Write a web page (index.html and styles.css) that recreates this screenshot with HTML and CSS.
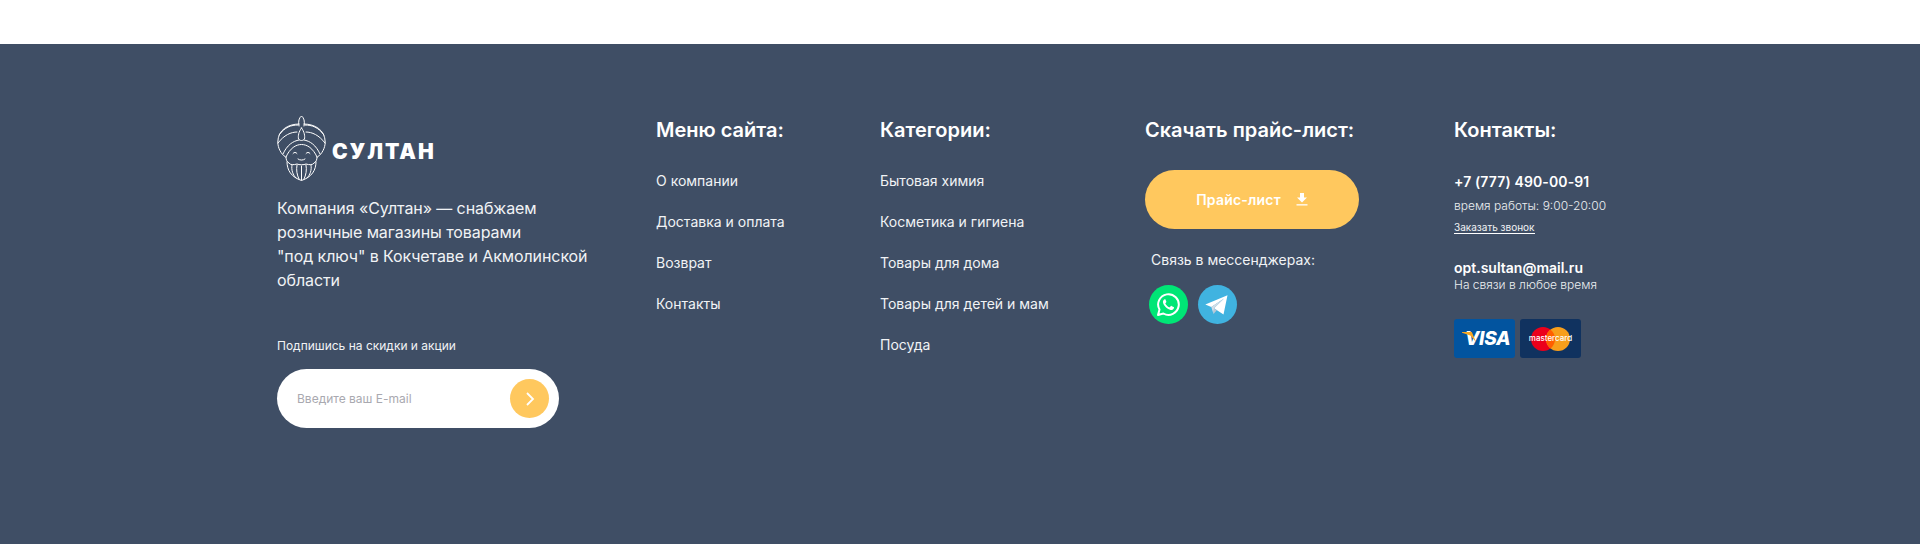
FILE: index.html
```html
<!DOCTYPE html>
<html lang="ru">
<head>
<meta charset="utf-8">
<title>Султан</title>
<link rel="stylesheet" href="styles.css">
</head>
<body>
<div class="top"></div>
<footer class="footer">
  <div class="col about">
    <div class="logo">
      <svg class="logo-mark" width="49" height="66" viewBox="0 0 49 66" fill="none" stroke="#fff" stroke-width="1" stroke-linecap="round" stroke-linejoin="round">
        <path d="M22 11C21 6 22 3 24.500 1C27 3 28 6 27 11"/>
        <path d="M22 9C11 9 1 15 .8 27C.8 33 4 39 8.500 42"/>
        <path d="M27 9C38 9 48 15 48.200 27C48.200 33 45 39 40.500 42"/>
        <path d="M2 20C8 12 14 10 21 10M47 20C41 12 35 10 28 10"/>
        <path d="M1 28C7 20 14 17 20 17M48 28C42 20 35 17 29 17"/>
        <path d="M24.500 13C27.500 17 28 21 27.500 24C26 26 23 26 21.500 24C21 21 21.500 17 24.500 13Z"/>
        <path d="M6 39C10 30 16 26 22 25M43 39C39 30 33 26 27 25"/>
        <path d="M9 42C13 33 19 29.500 24.500 29.500C30 29.500 36 33 40 42"/>
        <path d="M9 42C9 45 10 47 12 48C13 50 17 50 20 49C22 50 27 50 29 49C32 50 36 50 37 48C39 47 40 45 40 42"/>
        <path d="M16 38.500C17 37 19 37 20 38.500M29 38.500C30 37 32 37 33 38.500"/>
        <path d="M21 44C23 45.500 26 45.500 28 44"/>
        <path d="M10 47C10 55 14 62 24.500 65.500C35 62 39 55 39 47"/>
        <path d="M15 50C14 55 16 60 19 63M20 50C19 55 20 60 22 64M24.500 51V65M29 50C30 55 29 60 27 64M34 50C35 55 33 60 30 63"/>
      </svg>
      <span class="logo-text">СУЛТАН</span>
    </div>
    <p class="about-text">Компания «Султан» — снабжаем<br>розничные магазины товарами<br>"под ключ" в Кокчетаве и Акмолинской<br>области</p>
    <p class="sub-label">Подпишись на скидки и акции</p>
    <div class="subscribe">
      <span class="placeholder">Введите ваш E-mail</span>
      <span class="round-btn">
        <svg width="10" height="16" viewBox="0 0 10 16" fill="none" stroke="#fff" stroke-width="1.800"><path d="M2 2l6 6-6 6"/></svg>
      </span>
    </div>
  </div>

  <nav class="col menu">
    <h3 class="heading">Меню сайта:</h3>
    <ul class="links">
      <li>О компании</li>
      <li>Доставка и оплата</li>
      <li>Возврат</li>
      <li>Контакты</li>
    </ul>
  </nav>

  <nav class="col cats">
    <h3 class="heading">Категории:</h3>
    <ul class="links">
      <li>Бытовая химия</li>
      <li>Косметика и гигиена</li>
      <li>Товары для дома</li>
      <li>Товары для детей и мам</li>
      <li>Посуда</li>
    </ul>
  </nav>

  <div class="col price">
    <h3 class="heading">Скачать прайс-лист:</h3>
    <div class="price-btn">
      <span>Прайс-лист</span>
      <svg width="12" height="13" viewBox="0 0 12 13" fill="#fff"><path d="M4 0h4v4.500h3L6 9.500 1 4.500h3z"/><path d="M.5 11.200h11v1.300H.5z"/></svg>
    </div>
    <p class="msg-label">Связь в мессенджерах:</p>
    <div class="msgs">
      <span class="msg whatsapp">
        <svg width="25" height="25" viewBox="0 0 25 25" fill="none">
          <path d="M2 23l1.500-5.400A10.300 10.300 0 1 1 7.400 21.500z" stroke="#fff" stroke-width="2" stroke-linejoin="round"/>
          <path d="M9.400 6.900c-.4 0-1 .2-1.500.8-.6.700-1.100 1.700-.9 2.900.3 1.700 1.400 3.300 2.800 4.700 1.600 1.500 3.300 2.400 4.800 2.600 1.300.2 2.400-.4 3-1.200.4-.5.500-1.200.4-1.500l-2.500-1.300c-.3-.1-.5 0-.7.200l-.9 1.100c-.2.200-.4.200-.6.100-1.800-.7-3-1.900-3.900-3.500-.1-.2-.1-.4.100-.6l.7-.9c.2-.2.200-.4.100-.7l-1-2.400c-.1-.2-.3-.3-.4-.3z" fill="#fff"/>
        </svg>
      </span>
      <span class="msg telegram">
        <svg width="23" height="20" viewBox="0 0 23 20">
          <path d="M22.500.3L.3 9.600l6 2.300L19 3.500 9 13.300l9.500 6.200z" fill="#fff"/>
          <path d="M6.300 11.900l2.200 7 .5-5.600L19 3.500z" fill="#d5dde6"/>
          <path d="M8.500 18.900l3.300-3.700L9 13.300z" fill="#b9c6d4"/>
        </svg>
      </span>
    </div>
  </div>

  <div class="col contacts">
    <h3 class="heading">Контакты:</h3>
    <p class="strong phone">+7 (777) 490-00-91</p>
    <p class="small hours">время работы: 9:00-20:00</p>
    <p class="tiny">Заказать звонок</p>
    <p class="strong email">opt.sultan@mail.ru</p>
    <p class="small online">На связи в любое время</p>
    <div class="cards">
      <span class="card visa"><i class="visa-mark"></i><b class="visa-text">VISA</b></span>
      <span class="card mc">
        <svg width="39" height="24" viewBox="0 0 39 24">
          <circle cx="12" cy="12" r="12" fill="#eb001b"/>
          <circle cx="27" cy="12" r="12" fill="#f79e1b"/>
          <path d="M19.500 2.600a12 12 0 0 1 0 18.800 12 12 0 0 1 0-18.800z" fill="#ff5f00"/>
        </svg>
        <span class="mc-text">mastercard</span>
      </span>
    </div>
  </div>
</footer>
</body>
</html>
```
FILE: styles.css
```css
* { box-sizing: border-box; }
html, body { margin: 0; padding: 0; }
body {
  height: 544px;
  overflow: hidden;
  background: #fff;
  font-family: Inter, "Liberation Sans", sans-serif;
  color: #fff;
}
p, ul, h3 { margin: 0; padding: 0; }
ul { list-style: none; }
.top { height: 44px; background: #fff; }
.footer {
  height: 500px;
  background: #3f4e65;
  padding: 72px 0 0 277px;
  display: grid;
  grid-template-columns: 379px 224px 265px 309px 200px;
  align-items: start;
}
.logo { display: flex; align-items: center; gap: 6px; height: 66px; margin-top: -1px; }
.logo-mark { flex: none; }
.logo-text {
  font-size: 21px;
  font-weight: 900;
  letter-spacing: 1.900px;
  line-height: 1;
  margin-top: 6px;
}
.about-text {
  font-size: 16px;
  line-height: 24px;
  margin-top: 15px;
  font-weight: 400;
  letter-spacing: -.09px;
  color: #f1f3f5;
}
.sub-label { font-size: 12px; line-height: 16px; margin-top: 46px; font-weight: 400; color: #f1f3f5; }
.subscribe {
  width: 282px;
  height: 59px;
  margin-top: 15px;
  border-radius: 30px;
  background: #fff;
  display: flex;
  align-items: center;
  justify-content: space-between;
  padding: 0 10px 0 20px;
}
.placeholder { font-size: 12px; color: #a9a9b0; font-weight: 400; }
.round-btn {
  width: 39px;
  height: 39px;
  border-radius: 50%;
  background: #ffc85e;
  display: flex;
  align-items: center;
  justify-content: center;
}
.heading {
  font-size: 20px;
  line-height: 24px;
  font-weight: 600;
  margin-top: 2px;
}
.links { margin-top: 30px; }
.links li {
  font-size: 14px;
  line-height: 17px;
  font-weight: 400;
  margin-bottom: 24px;
  color: #f1f3f5;
}
.price-btn {
  width: 214px;
  height: 59px;
  margin-top: 28px;
  border-radius: 30px;
  background: #ffc85e;
  display: flex;
  align-items: center;
  justify-content: center;
  gap: 15px;
  font-size: 14px;
  font-weight: 600;
  letter-spacing: .2px;
}
.msg-label {
  font-size: 14px;
  line-height: 17px;
  font-weight: 400;
  margin: 22px 0 0 6px;
  color: #f1f3f5;
}
.msgs { display: flex; gap: 10px; margin: 17px 0 0 4px; }
.msg {
  width: 39px;
  height: 39px;
  border-radius: 50%;
  display: flex;
  align-items: center;
  justify-content: center;
}
.whatsapp { background: #00e676; }
.telegram { background: #40b3e0; }
.telegram svg { margin-right: 2px; }
.strong { font-size: 14px; line-height: 17px; font-weight: 600; }
.small { font-size: 12px; line-height: 15px; font-weight: 300; color: #eceef1; }
.phone { margin-top: 31px; letter-spacing: .12px; }
.hours { margin-top: 8px; }
.tiny {
  display: inline-block;
  font-size: 10px;
  line-height: 12px;
  font-weight: 400;
  margin-top: 8px;
  border-bottom: 1px solid #fff;
  color: #f1f3f5;
}
.email { margin-top: 24px; }
.online { margin-top: 1px; }
.cards { display: flex; gap: 5px; margin-top: 27px; }
.card {
  position: relative;
  width: 61px;
  height: 39px;
  border-radius: 3px;
  display: flex;
  align-items: center;
  justify-content: center;
  overflow: hidden;
}
.visa { background: #02549f; }
.visa-text {
  font-size: 19px;
  font-style: italic;
  font-weight: 800;
  letter-spacing: -.3px;
  margin-left: 6px;
}
.visa-mark {
  position: absolute;
  left: 8px;
  top: 13px;
  width: 14px;
  height: 10px;
  background: #f7a823;
  clip-path: polygon(0 0, 70% 0, 100% 100%, 60% 35%, 0 8%);
}
.mc { background: #10325f; }
.mc-text {
  position: absolute;
  left: 0;
  right: 0;
  top: 14px;
  text-align: center;
  font-size: 8px;
  line-height: 11px;
  font-weight: 500;
  color: #fff;
}
```
